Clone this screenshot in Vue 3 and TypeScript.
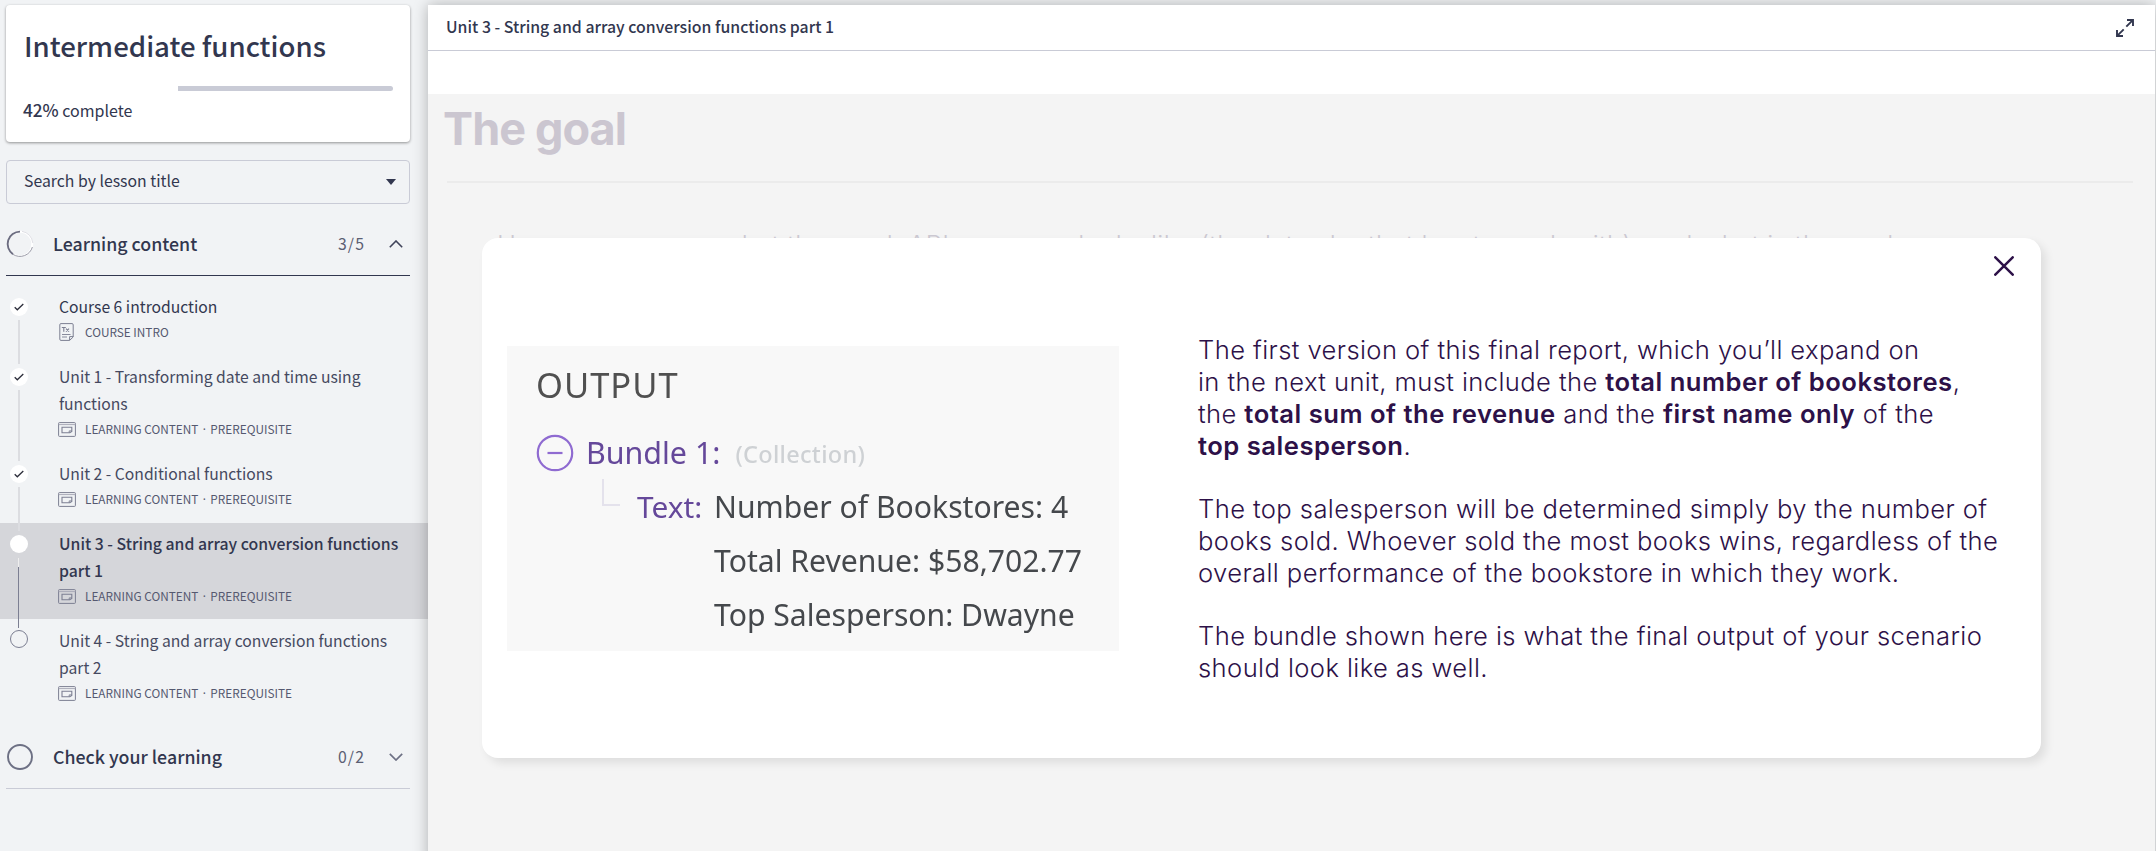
<script setup lang="ts">
interface Lesson {
  lines: string[]
  tags: string[]
  icon: 'doc' | 'frame'
  state: 'done' | 'current' | 'todo'
}

const learning = ['LEARNING CONTENT', 'PREREQUISITE']

const lessons: Lesson[] = [
  { lines: ['Course 6 introduction'], tags: ['COURSE INTRO'], icon: 'doc', state: 'done' },
  { lines: ['Unit 1 - Transforming date and time using', 'functions'], tags: learning, icon: 'frame', state: 'done' },
  { lines: ['Unit 2 - Conditional functions'], tags: learning, icon: 'frame', state: 'done' },
  { lines: ['Unit 3 - String and array conversion functions', 'part 1'], tags: learning, icon: 'frame', state: 'current' },
  { lines: ['Unit 4 - String and array conversion functions', 'part 2'], tags: learning, icon: 'frame', state: 'todo' },
]
</script>

<template>
  <div class="page">
    <aside class="sidebar">
      <div class="course-card">
        <h1>Intermediate functions</h1>
        <div class="progress"><div class="remaining"></div></div>
        <p class="complete"><b>42%</b> complete</p>
      </div>

      <div class="search">
        <span>Search by lesson title</span>
        <svg width="10" height="6" viewBox="0 0 10 6"><path d="M0 0h10L5 6z" fill="#32374f" /></svg>
      </div>

      <div class="section open">
        <svg class="ring" width="28" height="28" viewBox="0 0 28 28" fill="none">
          <circle cx="14" cy="14" r="12.2" stroke="#fff" stroke-width="2" />
          <path d="M14 1.6A12.4 12.4 0 0 0 7 24.2" stroke="#6b6c80" stroke-width="1.9" />
          <path d="M7 24.4A12.9 12.9 0 0 0 26.4 17" stroke="#8b8c9b" stroke-width=".9" />
          <path d="M16 1.3A12.9 12.9 0 0 1 26.8 13" stroke="#d5d6dd" stroke-width=".8" />
        </svg>
        <span class="name">Learning content</span>
        <span class="count">3/5</span>
        <svg width="14" height="8" viewBox="0 0 14 8" fill="none"><path d="M.8 7.2L7 1l6.2 6.2" stroke="#40445a" stroke-width="1.6" /></svg>
      </div>

      <div class="lessons">
        <div v-for="(l, i) in lessons" :key="i" class="lesson" :class="l.state">
          <div class="dot">
            <svg v-if="l.state === 'done'" width="10" height="8" viewBox="0 0 10 8" fill="none"><path d="M.7 4.3l2.6 2.5L9.3 1" stroke="#2c2d3a" stroke-width="1.3" /></svg>
          </div>
          <div class="body">
            <div v-for="t in l.lines" :key="t" class="title">{{ t }}</div>
            <div class="meta">
              <svg v-if="l.icon === 'doc'" width="18" height="18" viewBox="0 0 18 18" fill="none" stroke="#7c7f92">
                <path d="M3 .6h11a1.2 1.2 0 0 1 1.2 1.2V14L11.6 17.4H3a1.2 1.2 0 0 1-1.2-1.2V1.8A1.2 1.2 0 0 1 3 .6zM15 13.6h-3.4v3.6" />
                <path d="M3.8 4.5h4M5.8 4.5v4.2M8 5.6l3 3.1M11 5.6L8 8.7" stroke-width="1.1" />
                <path d="M4 11.5h8.5M4 14h5" stroke-width=".9" />
              </svg>
              <svg v-else width="18" height="15" viewBox="0 0 18 15" fill="none" stroke="#7c7f92">
                <rect x=".6" y=".6" width="16.8" height="13.8" rx=".8" />
                <path d="M.6 2.6h16.8" stroke="#a9abb8" />
                <path d="M13.8 9.4V5.3H4v5.4h7.8z" stroke-width="1.1" />
                <path d="M11.2 10.6V8.9h2.6" stroke-width=".9" />
              </svg>
              <span class="tag">{{ l.tags[0] }}</span>
              <template v-if="l.tags[1]">
                <span class="sep">·</span>
                <span>{{ l.tags[1] }}</span>
              </template>
            </div>
          </div>
        </div>
      </div>

      <div class="section closed">
        <svg class="ring" width="28" height="28" viewBox="0 0 28 28" fill="none"><circle cx="14" cy="14" r="12" stroke="#6d7084" stroke-width="1.9" /></svg>
        <span class="name">Check your learning</span>
        <span class="count">0/2</span>
        <svg width="14" height="8" viewBox="0 0 14 8" fill="none"><path d="M.8 .8L7 7l6.2-6.2" stroke="#6d7084" stroke-width="1.7" /></svg>
      </div>
    </aside>

    <main class="viewer">
      <header>
        <span>Unit 3 - String and array conversion functions part 1</span>
        <svg width="18" height="18" viewBox="0 0 18 18" fill="none" stroke="#32374f" stroke-width="1.9">
          <path d="M10.3 7.7L16.6 1.4M11 1h6v6M7.7 10.3L1.4 16.6M1 11v6h6" />
        </svg>
      </header>
      <div class="spacer"></div>
      <section class="content">
        <h2>The goal</h2>
        <hr>
        <p class="behind">Here you can see what the mock API response looks like (the data she that has to work with), and what is the goal</p>

        <div class="modal">
          <svg class="close" width="20" height="20" viewBox="0 0 20 20" fill="none"><path d="M1.3 1.3l17.4 17.4M18.7 1.3L1.3 18.7" stroke="#2d1148" stroke-width="2.5" stroke-linecap="round" /></svg>
          <div class="figure">
            <div class="output">OUTPUT</div>
            <div class="row bundle-row">
              <svg width="38" height="38" viewBox="0 0 38 38" fill="none" stroke="#8f6bd1" stroke-width="2.2"><circle cx="19" cy="19" r="17.2" /><path d="M11.5 19h15" /></svg>
              <span class="bundle">Bundle 1:</span>
              <span class="kind">(Collection)</span>
            </div>
            <div class="row text-row">
              <div class="elbow"></div>
              <span class="key">Text:</span>
              <div class="values">
                <div>Number of Bookstores: 4</div>
                <div>Total Revenue: $58,702.77</div>
                <div>Top Salesperson: Dwayne</div>
              </div>
            </div>
          </div>
          <div class="copy">
            <p>The first version of this final report, which you’ll expand on<br>in the next unit, must include the <b>total number of bookstores</b>,<br>the <b>total sum of the revenue</b> and the <b>first name only</b> of the<br><b>top salesperson</b>.</p>
            <p>The top salesperson will be determined simply by the number of<br>books sold. Whoever sold the most books wins, regardless of the<br>overall performance of the bookstore in which they work.</p>
            <p>The bundle shown here is what the final output of your scenario<br>should look like as well.</p>
          </div>
        </div>
      </section>
    </main>
  </div>
</template>

<style>
body { margin: 0; overflow: hidden; }
</style>

<style scoped>
* { box-sizing: border-box; }
h1, h2, p { margin: 0; }
svg { flex: none; display: block; }
.page {
  display: flex;
  width: 2156px;
  height: 851px;
  padding: 5px 1px 0 0;
  overflow: hidden;
  background: #f1f3f5;
  font-family: "Noto Sans CJK SC", "Noto Sans", sans-serif;
  color: #32374f;
}
.sidebar { width: 428px; flex: none; }
.course-card {
  width: 404px;
  height: 137px;
  margin-left: 6px;
  padding: 22px 17px 0 18px;
  background: #fff;
  border-radius: 4px;
  box-shadow: 0 1px 3px rgba(0, 0, 0, .4);
}
h1 { font-size: 27.6px; font-weight: 500; line-height: 36px; white-space: nowrap; }
.progress { display: flex; justify-content: flex-end; height: 5px; margin-top: 23px; }
.remaining { width: 215px; background: #c9cbd6; border-radius: 0 3px 3px 0; }
.complete { margin: 8px 0 0 -1px; font-size: 16px; line-height: 22px; }
.complete b { font-weight: 500; font-size: 17.2px; }
.search {
  display: flex;
  align-items: center;
  justify-content: space-between;
  width: 404px;
  height: 44px;
  margin: 18px 0 0 6px;
  padding: 0 13px 0 17px;
  border: 1px solid #c9cbd6;
  border-radius: 4px;
  font-size: 15.8px;
}
.search span { line-height: 24px; margin-top: -3px; }
.section {
  display: flex;
  align-items: center;
  width: 404px;
  height: 63px;
  margin: 9px 0 0 6px;
  padding-right: 7px;
}
.open { border-bottom: 1px solid #32374f; }
.closed { border-bottom: 1px solid #c9cbd6; }
.name { flex: 1; margin: -2px 0 0 19px; font-size: 17.8px; font-weight: 500; line-height: 26px; }
.count { margin: -1px 24px 0 0; font-size: 15.8px; letter-spacing: 1.1px; color: #5b5f73; }
.lessons { padding-top: 10px; }
.lesson { position: relative; display: flex; padding: 7px 0 12px 10px; }
.lesson.current { margin-bottom: 1px; padding-bottom: 11px; background: #d5d6da; }
.dot {
  display: flex;
  align-items: center;
  justify-content: center;
  width: 18px;
  height: 18px;
  margin: 5px 31px 0 0;
  border-radius: 50%;
  background: #fff;
}
.todo .dot { background: none; border: 1px solid #7c7f92; margin-top: 3px; }
.lesson:not(:last-child)::after {
  content: "";
  position: absolute;
  z-index: 1;
  left: 18px;
  top: 34px;
  bottom: -8px;
  width: 2px;
  background: #dcdde1;
}
.lesson.current::after {
  top: 35px;
  bottom: -9px;
  width: 1px;
  background: linear-gradient(#eee 0 9px, #7c7f92 9px);
}
.title { font-size: 15.7px; line-height: 27px; white-space: nowrap; color: #454960; }
.lesson:first-child .title { color: #32374f; }
.current .title { font-weight: 500; font-size: 15.8px; color: #32374f; }
.meta { display: flex; align-items: center; height: 24px; font-size: 11.8px; line-height: 18px; white-space: nowrap; color: #555970; }
.meta svg { margin-left: -1px; }
.tag { margin-left: 9px; }
.sep { width: 12px; text-align: center; font-family: "Noto Sans", sans-serif; }

.viewer {
  position: relative;
  z-index: 2;
  width: 1727px;
  height: 860px;
  background: #fff;
  box-shadow: 0 0 14px rgba(0, 0, 0, .28);
}
header {
  display: flex;
  align-items: center;
  justify-content: space-between;
  height: 46px;
  padding: 0 21px 0 18px;
  border-bottom: 1px solid #c9cbd6;
  font-size: 15.85px;
  font-weight: 500;
}
header span { margin-top: -3px; }
.spacer { height: 43px; }
.content { position: relative; height: 771px; padding: 1px 22px 0 15px; background: #f4f4f4; }
h2 {
  height: 86px;
  padding-top: 7px;
  font: 700 45px/54px Inter, sans-serif;
  letter-spacing: -.9px;
  color: #cbc6d0;
}
hr { height: 2px; margin: 0 0 0 4px; border: 0; background: #ebebeb; }
.behind {
  margin: 46px 0 0 54px;
  font: 300 25.6px/32px Inter, sans-serif;
  letter-spacing: .4px;
  color: #ccc9d2;
  white-space: nowrap;
}
.modal {
  position: absolute;
  left: 54px;
  top: 144px;
  display: flex;
  width: 1559px;
  height: 520px;
  padding: 108px 0 0 25px;
  background: #fff;
  border-radius: 16px;
  box-shadow: 5px 5px 10px rgba(0, 0, 0, .09);
}
.close { position: absolute; right: 27px; top: 18px; }
.figure {
  width: 612px;
  height: 305px;
  padding: 18px 0 0 29px;
  background: #f8f8f8;
  font-family: "Noto Sans", "Open Sans", sans-serif;
  color: #45484c;
  flex: none;
  white-space: nowrap;
}
.output { font-size: 34.5px; line-height: 42px; letter-spacing: 1px; color: #505050; filter: blur(.5px); }
.row { display: flex; filter: blur(.5px); }
.bundle-row { height: 54px; margin-top: 20px; align-items: center; }
.bundle { margin-left: 12px; font-size: 30.4px; line-height: 54px; color: #65489a; }
.kind { margin: 1px 0 0 15px; font-size: 23.5px; font-weight: 500; letter-spacing: .3px; color: #ced1d4; }
.text-row { line-height: 54px; font-size: 30.15px; }
.elbow { width: 18px; height: 27px; margin: -1px 0 0 66px; border: solid #e4e2ec; border-width: 0 0 2px 2px; }
.key { width: 77px; margin-left: 17px; font-size: 29.8px; color: #65489a; }
.copy {
  margin: -12px 0 0 79px;
  font: 300 25.6px/31.95px Inter, sans-serif;
  letter-spacing: .4px;
  color: #2d1148;
  white-space: nowrap;
}
.copy p + p { margin-top: 31.3px; }
.copy b { font-weight: 600; letter-spacing: .5px; }
</style>
